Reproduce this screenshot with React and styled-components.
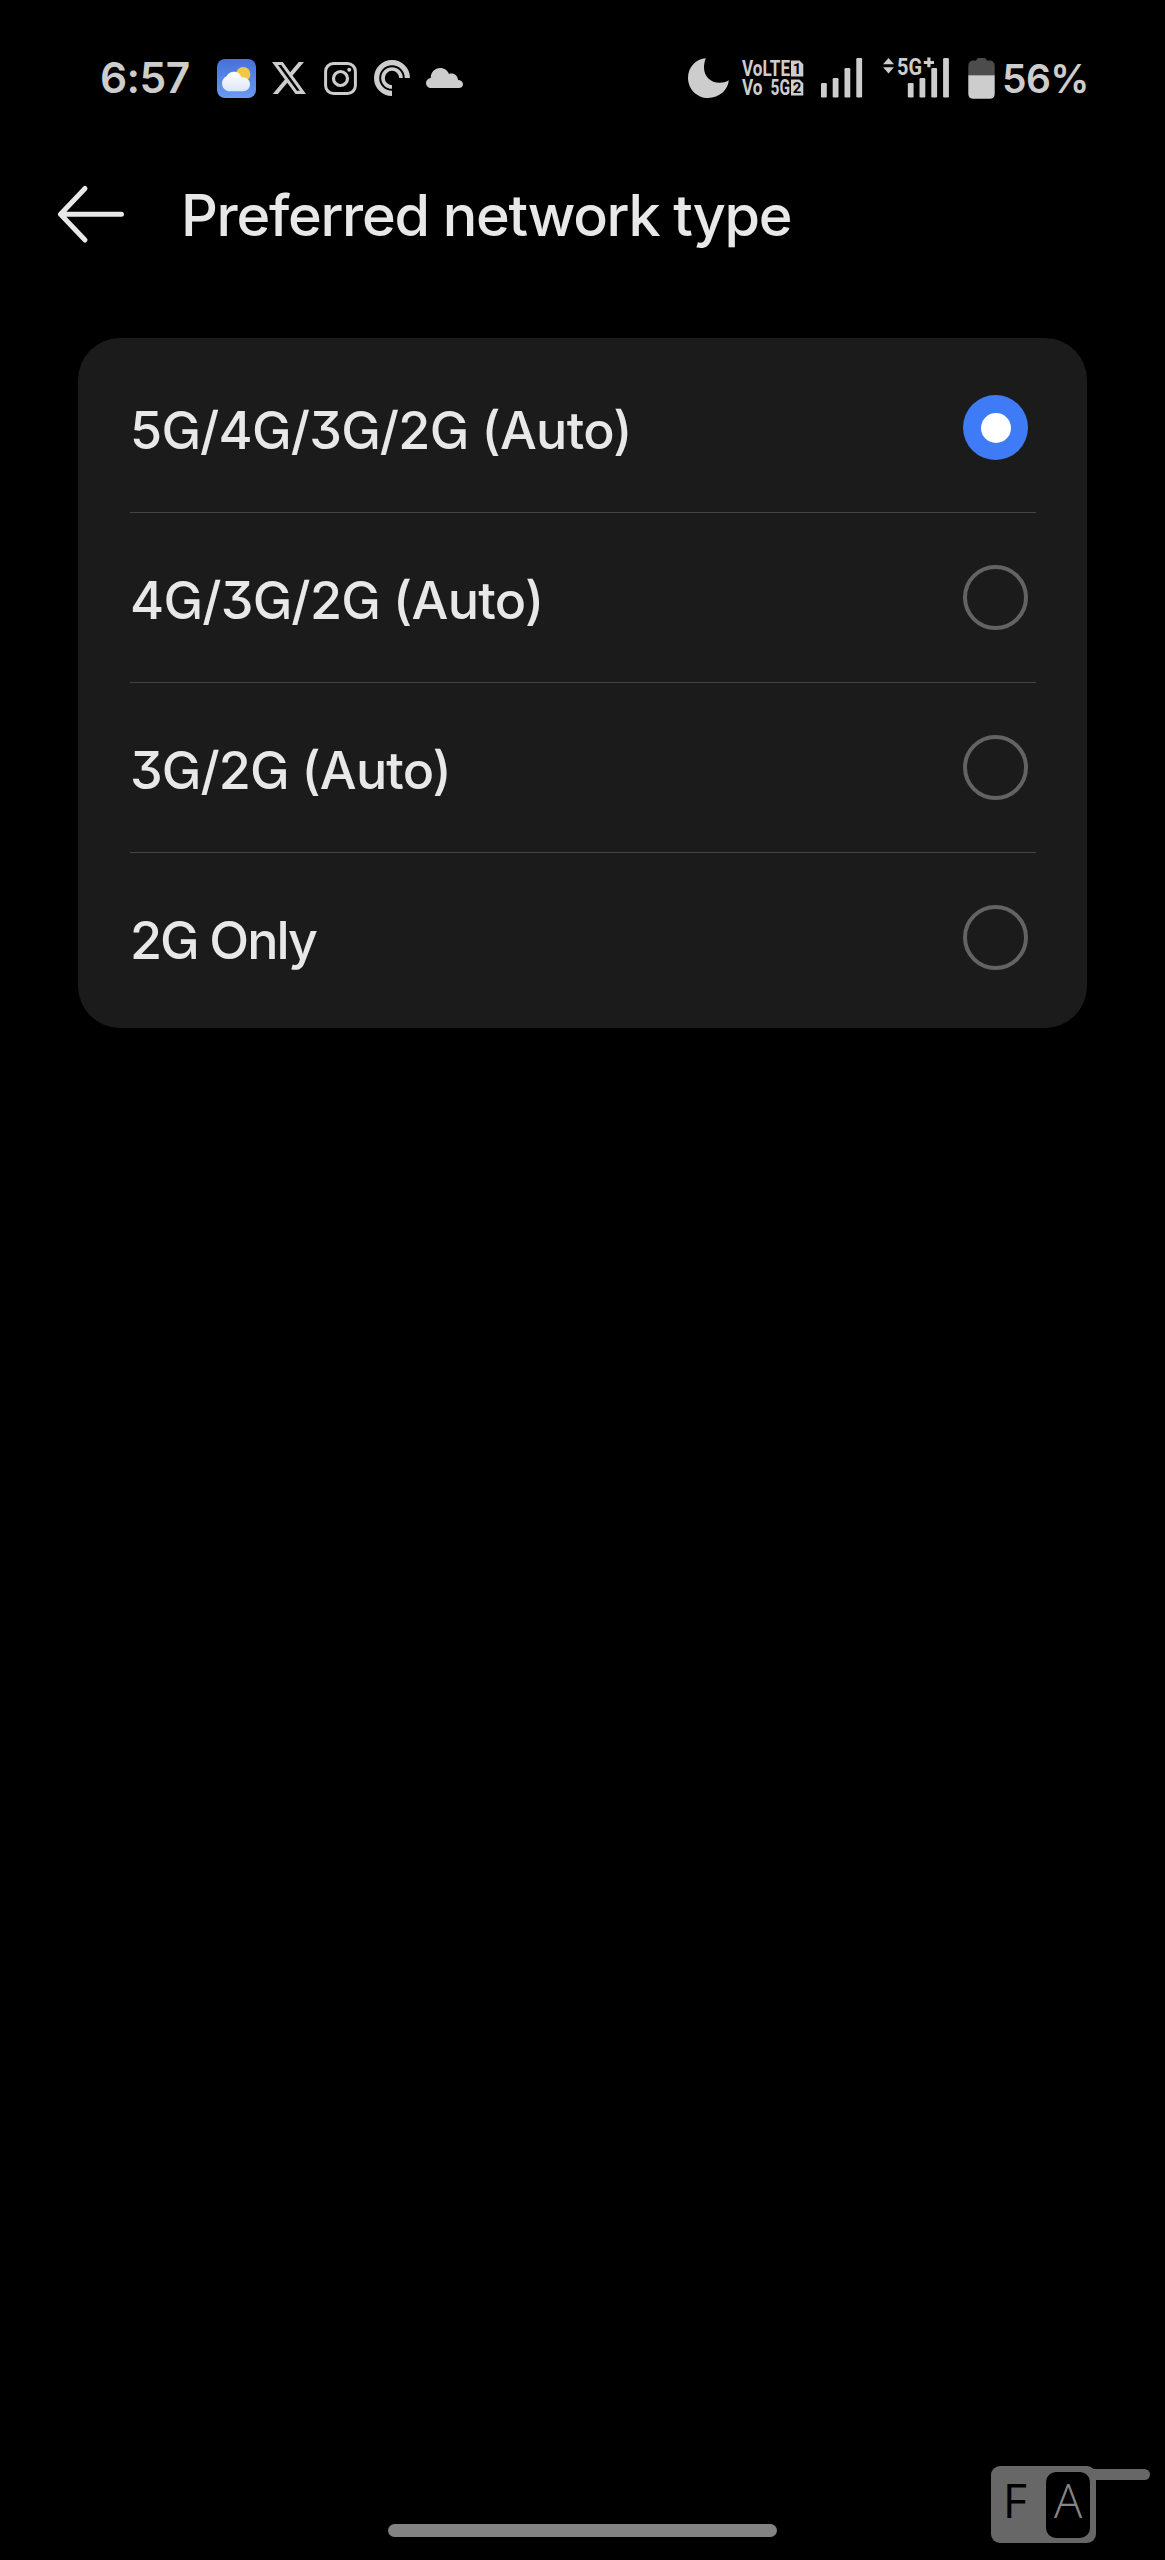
import React, { useState } from "react";
import styled, { createGlobalStyle } from "styled-components";

const GlobalStyle = createGlobalStyle`
  *, *::before, *::after { box-sizing: border-box; }
  body { margin: 0; background: #000; }
`;

const Screen = styled.div`
  position: relative;
  display: flex;
  flex-direction: column;
  width: 1165px;
  height: 2560px;
  overflow: hidden;
  background: #000;
  color: #e8e8e8;
  font-family: Inter, "Liberation Sans", sans-serif;
`;

const StatusBar = styled.div`
  display: flex;
  align-items: center;
  justify-content: space-between;
  height: 156px;
  padding: 0 78px 0 100px;
  color: #cdcdcd;
`;

const StatusGroup = styled.div`
  display: flex;
  align-items: center;
`;

const Clock = styled.span`
  width: 117px;
  font-size: 42.5px;
  line-height: 50px;
  font-weight: 600;
  letter-spacing: -0.6px;
  white-space: nowrap;
`;

const BatteryLabel = styled.span`
  width: 85px;
  margin-left: 7px;
  padding-top: 1px;
  font-size: 39px;
  line-height: 48px;
  font-weight: 600;
  letter-spacing: -0.6px;
  white-space: nowrap;
`;

const Glyph = styled.svg`
  display: block;
  flex: none;
  overflow: visible;
  width: ${(p) => p.$w}px;
  height: ${(p) => p.$h}px;
  margin-left: ${(p) => p.$gap || 0}px;
`;

const Header = styled.header`
  display: flex;
  align-items: center;
  height: 118px;
  padding-left: 55px;
`;

const BackButton = styled.button`
  display: flex;
  padding: 0;
  border: 0;
  background: none;
  color: inherit;
`;

const Title = styled.h1`
  margin: 0 0 0 54px;
  font-size: 57.5px;
  line-height: 80px;
  font-weight: 500;
  letter-spacing: -1.29px;
  white-space: nowrap;
`;

const Card = styled.main`
  display: flex;
  flex-direction: column;
  width: 1009px;
  height: 690px;
  margin: 64px 0 0 78px;
  padding: 5.5px 51px 6px 52px;
  border-radius: 42px;
  background: #1b1b1b;
`;

const Option = styled.button`
  display: flex;
  flex: 1;
  align-items: center;
  justify-content: space-between;
  padding: 0 8px 0 0;
  border: 0;
  border-bottom: ${(p) => (p.$last ? "0" : "1px solid #444")};
  background: none;
  color: inherit;
  font: inherit;
  text-align: left;
`;

const OptionLabel = styled.span`
  padding-top: 6px;
  font-size: 52px;
  line-height: 70px;
  font-weight: 500;
  letter-spacing: ${(p) => p.$track}px;
  font-feature-settings: "cv09", "cv10";
  white-space: nowrap;
`;

const Radio = styled.span`
  display: flex;
  align-items: center;
  justify-content: center;
  width: 65px;
  height: 65px;
  border-radius: 50%;
  border: ${(p) => (p.$checked ? "0" : "4.5px solid #636363")};
  background: ${(p) => (p.$checked ? "#407bf7" : "transparent")};
`;

const RadioDot = styled.span`
  width: 30px;
  height: 30px;
  border-radius: 50%;
  background: #fff;
`;

const Footer = styled.footer`
  display: flex;
  justify-content: center;
  margin-top: auto;
  padding-bottom: 23px;
`;

const HomeBar = styled.div`
  width: 389px;
  height: 13px;
  border-radius: 7px;
  background: #838383;
`;

const Watermark = styled.div`
  position: absolute;
  left: 991px;
  top: 2466px;
  display: flex;
  align-items: flex-start;
  color: #676767;
  font-family: "Open Sans", "Noto Sans", sans-serif;
  font-size: 47px;
`;

const MarkBox = styled.div`
  display: flex;
  width: 105px;
  height: 77px;
  padding: 6px 6px 5px 0;
  border-radius: 9px;
  background: #676767;
`;

const MarkLetter = styled.span`
  display: flex;
  justify-content: center;
  width: ${(p) => (p.$inverse ? 44 : 55)}px;
  height: 66px;
  padding-right: ${(p) => (p.$inverse ? 0 : 7)}px;
  border-radius: 10px;
  background: ${(p) => (p.$inverse ? "#000" : "transparent")};
  color: ${(p) => (p.$inverse ? "#858585" : "#000")};
  font-weight: ${(p) => (p.$inverse ? 300 : 400)};
  line-height: ${(p) => (p.$inverse ? 57 : 56)}px;
`;

const MarkHandle = styled.div`
  width: 60px;
  height: 11px;
  margin: 3px 0 0 -6px;
  border-radius: 0 6px 6px 0;
  background: #676767;
`;

const WeatherIcon = () => (
  <Glyph $w={39} $h={39} viewBox="0 0 39 39">
    <defs>
      <linearGradient id="sky" x1="0" y1="0" x2="0" y2="1">
        <stop offset="0" stopColor="#4472d9" />
        <stop offset="1" stopColor="#6b9af0" />
      </linearGradient>
      <linearGradient id="puff" x1="0" y1="0" x2="0" y2="1">
        <stop offset="0" stopColor="#ffffff" />
        <stop offset="1" stopColor="#dce6f6" />
      </linearGradient>
    </defs>
    <rect width="39" height="39" rx="8" fill="url(#sky)" />
    <circle cx="26.2" cy="15.2" r="7.2" fill="#f2c744" />
    <path
      d="M13 32.300C8.600 32.300 5 28.900 5 24.500C5 20.800 7 18.200 9.600 17.200C11 14.400 13.600 12.800 16.800 12.800C20.600 12.800 23.400 15 24.500 18.200C29.600 17.600 33 20.700 33 25.100C33 29.400 30 32.300 25.800 32.300Z"
      fill="url(#puff)"
    />
  </Glyph>
);

const XIcon = () => (
  <Glyph $w={34} $h={32} $gap={16} viewBox="0 1.15 24 21.7" preserveAspectRatio="none" fill="currentColor">
    <path d="M18.901 1.153h3.68l-8.04 9.19L24 22.846h-7.406l-5.8-7.584-6.638 7.584H.474l8.6-9.83L0 1.154h7.594l5.243 6.932ZM17.61 20.644h2.039L6.486 3.240H4.298Z" />
  </Glyph>
);

const InstagramIcon = () => (
  <Glyph $w={33} $h={33} $gap={18} viewBox="0 0 33 33" fill="none" stroke="currentColor">
    <rect x="1.6" y="1.6" width="29.8" height="29.8" rx="7.8" strokeWidth="3" />
    <circle cx="16.500" cy="16.500" r="7" strokeWidth="3.200" />
    <circle cx="25.200" cy="7.800" r="2" fill="currentColor" stroke="none" />
  </Glyph>
);

const PodcastIcon = () => (
  <Glyph $w={36} $h={36} $gap={17} viewBox="0 0 36 36" fill="none" stroke="currentColor">
    <path d="M33.400 18A15.400 15.400 0 1 0 18 33.400" strokeWidth="5.200" />
    <path d="M27 18A9 9 0 1 0 18 27" strokeWidth="3.600" />
  </Glyph>
);

const CloudIcon = () => (
  <Glyph $w={37} $h={20} $gap={15.500} viewBox="0 0 37 20" fill="currentColor">
    <path d="M5.300 20C2.200 20 0 17.900 0 15C0 12.300 2 10.200 4.800 9.900C4.700 4.200 8.900 0 14.300 0C18.300 0 21.600 2.300 23 6C27.500 4.500 31.800 7.400 32 12.100C34.900 12.200 37 13.800 37 16.200C37 18.400 35.300 20 32.900 20Z" />
  </Glyph>
);

const MoonIcon = () => (
  <Glyph $w={41} $h={40} viewBox="0 0 41 40" fill="currentColor">
    <path d="M17.800 0.200C8.200 0.700 0 9.200 0 19.700C0 31 8.900 40 20.100 40C31.200 40 40.200 31.700 40.800 22.300C37.700 24.100 34.900 24.800 31.600 24.800C22.700 24.800 16 18.100 16 9.700C16 6.200 16.600 3.100 17.800 0.200Z" />
  </Glyph>
);

const VolteIcon = () => (
  <Glyph $w={62} $h={40} $gap={13.500} viewBox="0 0 62 40" fill="currentColor" fontFamily="Roboto, Inter, sans-serif" fontWeight="700" fontSize="21.500">
    <text x="0" y="17.800" textLength="48" lengthAdjust="spacingAndGlyphs">VoLTE</text>
    <text x="0" y="37.200" textLength="20.500" lengthAdjust="spacingAndGlyphs">Vo</text>
    <text x="28.500" y="37.200" textLength="19.500" lengthAdjust="spacingAndGlyphs">5G</text>
    <path d="M49 2.500H57.500L61.300 6.300V18.500H49Z" />
    <path d="M49 21.500H57.500L61.300 25.300V37.500H49Z" />
    <g fill="#000" fontSize="15" textAnchor="middle">
      <text x="55" y="16">1</text>
      <text x="55" y="35">2</text>
    </g>
  </Glyph>
);

const BARS = [
  [0, 25],
  [11.7, 20],
  [23.5, 10],
  [35.3, 0],
];

const SignalBars = ({ x = 0 }) =>
  BARS.map(([left, top]) => (
    <rect key={left} x={x + left} y={top} width="5.800" height={39.500 - top} rx="1.200" />
  ));

const SignalIcon = () => (
  <Glyph $w={41} $h={40} $gap={17} viewBox="0 0 41 40" fill="currentColor">
    <SignalBars />
  </Glyph>
);

const FiveGIcon = () => (
  <Glyph $w={66} $h={40} $gap={21} viewBox="0 0 66 40" fill="currentColor">
    <path d="M0 6.300L5.500 0L11 6.300Z" />
    <path d="M0 9.300L5.500 15.600L11 9.300Z" />
    <text x="14" y="16.800" textLength="25" lengthAdjust="spacingAndGlyphs" fontFamily="Roboto, Inter, sans-serif" fontWeight="700" fontSize="23.500">5G</text>
    <path d="M44.300 -0.600H47.500V2.900H51V6H47.500V9.200H44.300V6H40.800V2.900H44.300Z" />
    <SignalBars x={24.800} />
  </Glyph>
);

const BatteryIcon = () => (
  <Glyph $w={27} $h={41} $gap={19} viewBox="0 0 27 41">
    <path d="M10.500 0H16.500Q18.500 0 18.800 2.500H22Q26.700 3 26.700 8V17.500H0.300V8Q0.300 3 5 2.500H8.200Q8.500 0 10.500 0Z" fill="#4c4c4c" />
    <path d="M0.300 17.200H26.700V35.500Q26.700 40.800 21.500 40.800H5.500Q0.300 40.800 0.300 35.500Z" fill="currentColor" />
  </Glyph>
);

const BackIcon = () => (
  <Glyph $w={72} $h={60} viewBox="0 0 72 60" fill="none" stroke="currentColor" strokeWidth="5" strokeLinecap="round" strokeLinejoin="round">
    <path d="M30 3.500L5.500 29.300L30 55M5.500 29.300H66.500" />
  </Glyph>
);

const OPTIONS = [
  { label: "5G/4G/3G/2G (Auto)", track: -0.72 },
  { label: "4G/3G/2G (Auto)", track: -0.7 },
  { label: "3G/2G (Auto)", track: -0.85 },
  { label: "2G Only", track: -2 },
];

export default function App() {
  const [selected, setSelected] = useState(0);
  return (
    <Screen>
      <GlobalStyle />
      <StatusBar>
        <StatusGroup>
          <Clock>6:57</Clock>
          <WeatherIcon />
          <XIcon />
          <InstagramIcon />
          <PodcastIcon />
          <CloudIcon />
        </StatusGroup>
        <StatusGroup>
          <MoonIcon />
          <VolteIcon />
          <SignalIcon />
          <FiveGIcon />
          <BatteryIcon />
          <BatteryLabel>56%</BatteryLabel>
        </StatusGroup>
      </StatusBar>
      <Header>
        <BackButton aria-label="Back">
          <BackIcon />
        </BackButton>
        <Title>Preferred network type</Title>
      </Header>
      <Card role="radiogroup">
        {OPTIONS.map(({ label, track }, i) => (
          <Option
            key={label}
            role="radio"
            aria-checked={i === selected}
            $last={i === OPTIONS.length - 1}
            onClick={() => setSelected(i)}
          >
            <OptionLabel $track={track}>{label}</OptionLabel>
            <Radio $checked={i === selected}>{i === selected && <RadioDot />}</Radio>
          </Option>
        ))}
      </Card>
      <Footer>
        <HomeBar />
      </Footer>
      <Watermark>
        <MarkBox>
          <MarkLetter>F</MarkLetter>
          <MarkLetter $inverse>A</MarkLetter>
        </MarkBox>
        <MarkHandle />
      </Watermark>
    </Screen>
  );
}
